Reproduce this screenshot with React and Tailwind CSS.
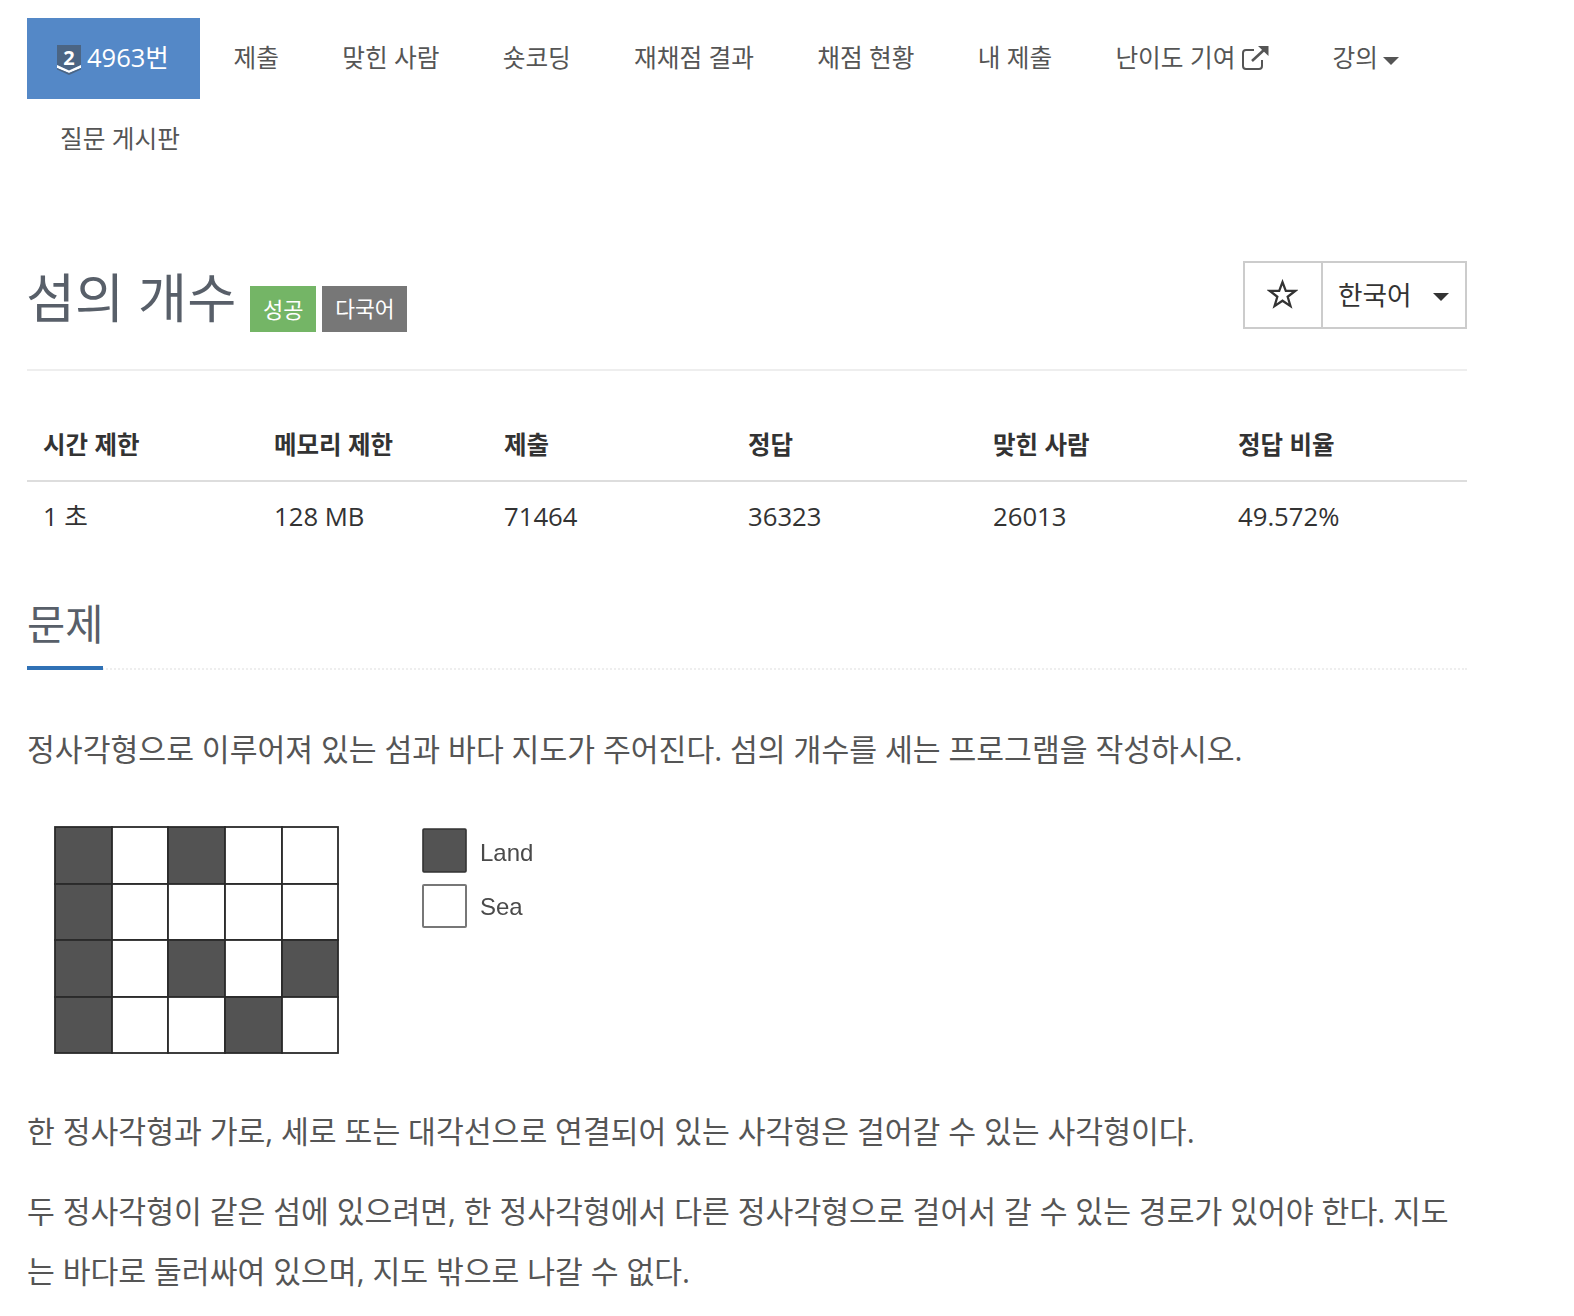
import React from "react";

const navItems = ["제출", "맞힌 사람", "숏코딩", "재채점 결과", "채점 현황", "내 제출"];

const headers = [
  { label: "시간 제한", value: "1 초", width: "w-[231px]" },
  { label: "메모리 제한", value: "128 MB", width: "w-[230px]" },
  { label: "제출", value: "71464", width: "w-[244px]" },
  { label: "정답", value: "36323", width: "w-[245px]" },
  { label: "맞힌 사람", value: "26013", width: "w-[245px]" },
  { label: "정답 비율", value: "49.572%", width: "w-[245px]" },
];

// 1 = land, 0 = sea
const islandMap = [
  [1, 0, 1, 0, 0],
  [1, 0, 0, 0, 0],
  [1, 0, 1, 0, 1],
  [1, 0, 0, 1, 0],
];

const TierBadge = () => (
  <div className="relative w-[24px] h-[30px] mt-[5px] shrink-0">
    <svg width="24" height="30" viewBox="0 0 24 30" className="block">
      <path d="M0 0h24v20L12 25.500 0 20z" fill="#4b6584" />
      <path d="M0 20l12 5.500L24 20v3l-12 5L0 23z" fill="#fff" />
      <path d="M0 23l12 5 12-5v1.500L12 30 0 24.500z" fill="#4b6584" />
    </svg>
    <span className="absolute inset-x-0 top-[2px] text-center text-[20px] leading-[22px] font-bold text-white">2</span>
  </div>
);

const ExternalLink = () => (
  <svg width="27" height="24" viewBox="0 0 27 24" fill="none" stroke="#555" strokeWidth="2" className="shrink-0">
    <path d="M12 4H4a3 3 0 0 0-3 3v13a3 3 0 0 0 3 3h13a3 3 0 0 0 3-3v-6" />
    <path d="M10 15L23 3" strokeWidth="2.600" />
    <path d="M16 0h10.500v10z" fill="#555" stroke="none" />
  </svg>
);

const Caret = ({ className }) => (
  <span className={`inline-block w-0 h-0 border-x-[8px] border-x-transparent border-t-[8px] ${className}`} />
);

const IslandFigure = () => {
  const xs = [55, 112, 168, 225, 282, 338];
  const ys = [826, 883, 939, 996, 1052];
  return (
    <svg width="540" height="250" viewBox="27 815 540 250" className="block blur-[0.6px]">
      {islandMap.map((row, r) =>
        row.map((cell, c) => (
          <rect
            key={`${r}-${c}`}
            x={xs[c]}
            y={ys[r]}
            width={xs[c + 1] - xs[c]}
            height={ys[r + 1] - ys[r]}
            fill={cell ? "#535353" : "#fff"}
            stroke="#2a2a2a"
            strokeWidth="1.8"
          />
        ))
      )}
      <rect x="423" y="828" width="43" height="43" rx="1" fill="#535353" stroke="#333" strokeWidth="1.6" />
      <rect x="423" y="884" width="43" height="42" rx="1" fill="#fff" stroke="#777" strokeWidth="2" />
      <text x="480" y="860" fontSize="24" fill="#4a4a4a" fontFamily="Liberation Sans">Land</text>
      <text x="480" y="914" fontSize="24" fill="#4a4a4a" fontFamily="Liberation Sans">Sea</text>
    </svg>
  );
};

const App = () => {
  return (
    <div
      className="bg-white min-h-[1316px] pl-[27px] pr-[107px] pt-[18px] overflow-hidden text-[#555]"
      style={{ fontFamily: '"Open Sans", "Noto Sans CJK KR", sans-serif' }}
    >
      {/* Problem menu */}
      <ul className="flex flex-wrap text-[24.7px] text-[#555]">
        <li className="h-[81px] w-[173px] mr-[2px] pl-[30px] pb-[2px] bg-[#5488c7] text-white flex items-center gap-[6px]">
          <TierBadge />
          <span className="text-[25.5px]">4963번</span>
        </li>
        {navItems.map((item) => (
          <li key={item} className="h-[81px] px-[31.6px] pb-[2px] flex items-center">{item}</li>
        ))}
        <li className="h-[81px] px-[31.6px] pb-[2px] flex items-center gap-[7px]">
          난이도 기여
          <ExternalLink />
        </li>
        <li className="h-[81px] px-[31.6px] pb-[2px] flex items-center gap-[5px]">
          강의
          <Caret className="border-t-[#555] mt-[6px]" />
        </li>
        <li className="h-[81px] px-[33px] pb-[2px] flex items-center">질문 게시판</li>
      </ul>

      {/* Title */}
      <div className="mt-[81px] h-[110px] border-b-2 border-[#eee] flex items-start justify-between">
        <div className="flex items-start">
          <h1 className="text-[53.4px] leading-[72px] text-[#585f69] mt-[1px] ml-[-1px] mb-[-1px]">섬의 개수</h1>
          <span className="ml-[14px] mt-[25px] h-[46px] w-[66px] justify-center flex items-center bg-[#74b566] text-white text-[22px]">성공</span>
          <span className="ml-[6px] mt-[25px] h-[46px] w-[85px] justify-center flex items-center bg-[#777] text-white text-[21.5px]">다국어</span>
        </div>
        <div className="flex h-[68px] border-2 border-[#ccc] text-[#333]">
          <div className="w-[78px] border-r-2 border-[#ccc] flex items-center justify-center pr-[2px] pb-[2px]">
            <svg width="31" height="31" viewBox="0 0 30 30" fill="none" stroke="#333" strokeWidth="2.2">
              <path d="M15 3l3.200 8.600h9l-7.200 5.600 2.700 9L15 21l-7.700 5.200 2.700-9-7.200-5.600h9z" />
            </svg>
          </div>
          <div className="w-[142px] pl-[15px] flex items-center text-[26.7px]">
            한국어
            <Caret className="border-t-[#333] ml-[21px] mt-[4px]" />
          </div>
        </div>
      </div>

      {/* Problem info */}
      <table className="mt-[37px] w-full table-fixed border-collapse text-[#333]">
        <thead>
          <tr className="border-b-2 border-[#ddd]">
            {headers.map((h) => (
              <th key={h.label} className={`${h.width} h-[73px] pl-[16px] pt-[3px] text-left font-bold text-[24.5px]`}>{h.label}</th>
            ))}
          </tr>
        </thead>
        <tbody>
          <tr>
            {headers.map((h) => (
              <td key={h.label} className="h-[68px] pl-[16px] pt-[3px] text-[25.7px]">{h.value}</td>
            ))}
          </tr>
        </tbody>
      </table>

      {/* Problem description */}
      <section className="mt-[39px]">
        <div className="border-b-2 border-dotted border-[#eee] h-[82px]">
          <h2 className="inline-block text-[41.500px] leading-[72px] h-[82px] border-b-4 border-[#3071b5] text-[#585f69]">문제</h2>
        </div>
        <div className="mt-[50px] text-[30.25px] leading-[60px] text-[#555]">
          <p>정사각형으로 이루어져 있는 섬과 바다 지도가 주어진다. 섬의 개수를 세는 프로그램을 작성하시오.</p>
          <div className="mt-[36px]">
            <IslandFigure />
          </div>
          <p className="mt-[36px]">한 정사각형과 가로, 세로 또는 대각선으로 연결되어 있는 사각형은 걸어갈 수 있는 사각형이다.</p>
          <p className="mt-[20px]">두 정사각형이 같은 섬에 있으려면, 한 정사각형에서 다른 정사각형으로 걸어서 갈 수 있는 경로가 있어야 한다. 지도는 바다로 둘러싸여 있으며, 지도 밖으로 나갈 수 없다.</p>
        </div>
      </section>
    </div>
  );
};

export default App;
